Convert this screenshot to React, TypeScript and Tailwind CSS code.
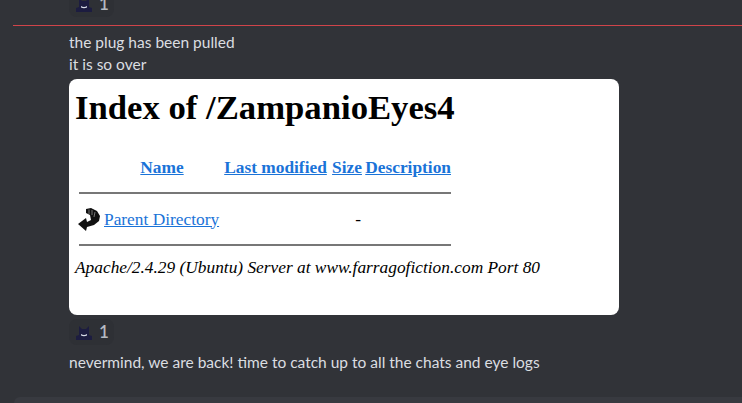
function Cat() {
  return (
    <svg width="16" height="15" viewBox="0 0 16 15" className="shrink-0">
      <path d="M0 15 L0 11 L3 10 L3 1 L6 4 L10 4 L13 1 L13 10 L16 11 L16 15 Z" fill="#1c1c40" />
      <path d="M5 9 Q8 11 11 9 L11 10.5 Q8 12 5 10.5 Z" fill="#d8dce8" />
    </svg>
  );
}

function Reaction() {
  return (
    <div className="flex items-center gap-[7px] w-[45px] h-[26px] rounded-[8px] bg-[#2e3035] pl-[7px]">
      <Cat />
      <span className="text-[17px] leading-[20px] font-semibold text-[#b5bac1]">1</span>
    </div>
  );
}

function Rule() {
  return (
    <tr>
      <th colSpan={5} className="h-[19px] p-0 pt-[8px] font-normal align-top">
        <div className="h-[2px] bg-[#777777]" />
      </th>
    </tr>
  );
}

export default function App() {
  return (
    <div className="w-[742px] h-[403px] overflow-hidden bg-[#313338] font-['Lato',sans-serif] flex flex-col">
      <div className="pl-[69px] -mt-[9px] shrink-0">
        <Reaction />
      </div>
      <div className="ml-[13px] h-px bg-[#d0444a] shrink-0 mt-[8px]" />
      <div className="pl-[69px] pt-[5px] text-[15.5px] leading-[22px] text-[#dbdee1]">
        <p>the plug has been pulled</p>
        <p>it is so over</p>
      </div>
      <div className="ml-[69px] mt-[4px] w-[550px] h-[236px] shrink-0 bg-white rounded-[8px] pl-[6px] pt-[9px] text-black font-['Liberation_Serif',serif]">
        <h1 className="text-[34.7px] leading-[40px] font-bold">Index of /ZampanioEyes4</h1>
        <table className="mt-[23px] ml-[4px] w-[372px] table-fixed border-collapse text-[17.35px] leading-[20px]">
          <colgroup>
            <col className="w-[25px]" />
            <col className="w-[116px]" />
            <col className="w-[111px]" />
            <col className="w-[32px]" />
            <col />
          </colgroup>
          <thead>
            <tr className="h-[33px] text-[#1a73d8] underline">
              <th className="p-0" />
              <th className="p-0 font-bold">Name</th>
              <th className="p-0 font-bold whitespace-nowrap">Last modified</th>
              <th className="p-0 font-bold">Size</th>
              <th className="p-0 font-bold text-right">Description</th>
            </tr>
            <Rule />
          </thead>
          <tbody>
            <tr className="h-[33px]">
              <td className="p-0">
                <svg width="23" height="24" viewBox="0 0 23 24" className="-ml-px">
                  <path d="M8 1 L13 0 L19 3 L22 8 L21 13 L16 17 L9 19 L8 23 L0 16 L8 10 L9 14 L13 12 L12 7 L8 5 Z" fill="#111111" />
                  <path d="M11 1.5 L11 6 M14 2 L14 7 M17 4 L16 9" stroke="#777777" strokeWidth="1" fill="none" />
                </svg>
              </td>
              <td className="p-0 whitespace-nowrap text-[#1a73d8] underline">Parent Directory</td>
              <td className="p-0" />
              <td className="p-0 pr-[2px] text-right">-</td>
              <td className="p-0" />
            </tr>
            <Rule />
          </tbody>
        </table>
        <p className="italic text-[17.35px] leading-[20px] mt-[3px]">Apache/2.4.29 (Ubuntu) Server at www.farragofiction.com Port 80</p>
      </div>
      <div className="pl-[69px] pt-[4px] shrink-0">
        <Reaction />
      </div>
      <p className="pl-[69px] pt-[6px] text-[15.5px] leading-[22px] text-[#dbdee1]">
        nevermind, we are back! time to catch up to all the chats and eye logs
      </p>
      <div className="ml-[14px] mt-[24px] flex-1 bg-[#383a40] rounded-tl-[8px]" />
    </div>
  );
}
